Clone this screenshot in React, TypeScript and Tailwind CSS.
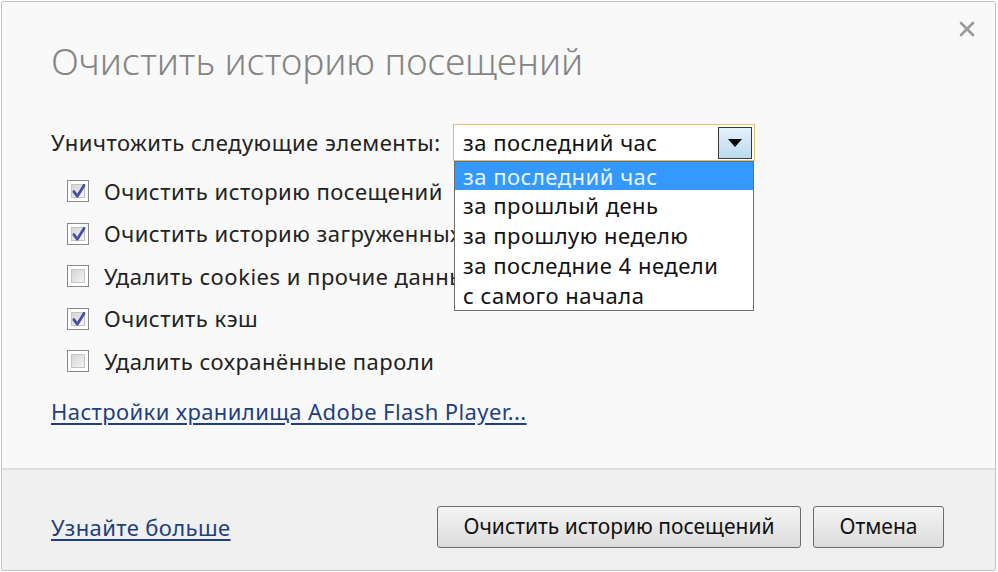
import React from 'react';

const font = { fontFamily: '"Noto Sans", "Open Sans", sans-serif' };

type CheckProps = { checked: boolean; label: string };

const Check = ({ checked, label }: CheckProps): JSX.Element => {
  return (
    <div className="flex items-center h-[42.5px] whitespace-nowrap">
      <div className="w-[22px] h-[22px] ml-[16px] border border-[#8a8a8a] bg-white p-[3px] shrink-0">
        <div className="relative w-full h-full border border-[#c4c4c4] bg-gradient-to-br from-[#d6d6d6] to-[#f4f4f4]">
          {checked && (
            <svg viewBox="0 0 14 14" className="absolute -left-[1px] -top-[2px] w-[16px] h-[16px]">
              <path d="M2.5 7.5 L5.5 11.5 L11.5 2" fill="none" stroke="#4b4ca6" strokeWidth="2.4" strokeLinecap="round" strokeLinejoin="round" />
            </svg>
          )}
        </div>
      </div>
      <span className="ml-[15px] text-[22px] tracking-[0.5px] text-[#222]">{label}</span>
    </div>
  );
};

const options = ['за последний час', 'за прошлый день', 'за прошлую неделю', 'за последние 4 недели', 'с самого начала'];

const App = (): JSX.Element => {
  return (
    <div className="w-[998px] h-[572px] bg-white overflow-hidden" style={font}>
      <div className="relative ml-[1px] mt-[1px] w-[995px] h-[570px] border border-[#c2c2c2] rounded-[2px] bg-[#f9f9f9] flex flex-col">
        <button className="absolute right-[20px] top-[19px] w-[16px] h-[16px]">
          <svg viewBox="0 0 16 16" className="w-full h-full">
            <path d="M2 2 L14 14 M14 2 L2 14" stroke="#9a9a9a" strokeWidth="2.6" strokeLinecap="round" />
          </svg>
        </button>

        <div className="flex-1 px-[49px] pt-[36px]">
          <h1 className="text-[37px] leading-[46px] font-light text-[#858585] whitespace-nowrap">
            Очистить историю посещений
          </h1>

          <div className="flex items-center mt-[40px] h-[37px] relative">
            <span className="text-[22px] tracking-[0.5px] text-[#222] whitespace-nowrap">Уничтожить следующие элементы:</span>
            <div className="absolute left-[402px] top-0 w-[302px]">
              <div className="h-[37px] border border-[#e2bd73] bg-white flex items-center pl-[9px] pr-[2px]">
                <span className="flex-1 text-[22px] tracking-[0.5px] text-[#111]">за последний час</span>
                <div className="w-[34px] h-[32px] border border-[#3a3a3a] bg-gradient-to-b from-[#e4f1fa] to-[#bcdaf0] flex items-center justify-center">
                  <svg viewBox="0 0 14 8" className="w-[14px] h-[8px]">
                    <path d="M0 0 H14 L7 8 Z" fill="#000" />
                  </svg>
                </div>
              </div>
              <div className="ml-[1px] w-[300px] border border-[#6e6e6e] bg-white z-10 relative">
                {options.map((o, i) => (
                  <div
                    key={o}
                    className={
                      i === 0
                        ? 'h-[28px] leading-[28px] px-[8px] bg-[#3399ff] text-[#eaf4ff] text-[22px] tracking-[0.5px]'
                        : 'h-[30px] leading-[30px] px-[8px] text-[#111] text-[22px] tracking-[0.5px]'
                    }
                  >
                    {o}
                  </div>
                ))}
              </div>
            </div>
          </div>

          <div className="mt-[9px] w-[403px] overflow-hidden">
            <Check checked label="Очистить историю посещений" />
            <Check checked label="Очистить историю загруженных файлов" />
            <Check checked={false} label="Удалить cookies и прочие данные сайтов и плагинов" />
            <Check checked label="Очистить кэш" />
            <Check checked={false} label="Удалить сохранённые пароли" />
          </div>

          <a href="#" className="inline-block mt-[12px] text-[22px] tracking-[0.4px] text-[#1f3f7f] underline underline-offset-[3px]">
            Настройки хранилища Adobe Flash Player...
          </a>
        </div>

        <div className="h-[102px] border-t-2 border-[#dedede] bg-[#f0f0f0] flex items-center px-[49px] pt-[14px]">
          <a href="#" className="text-[22px] tracking-[0.4px] text-[#1f3f7f] underline underline-offset-[3px]">
            Узнайте больше
          </a>
          <div className="flex-1" />
          <button className="h-[42px] w-[364px] rounded-[3px] border border-[#6c6c6c] bg-gradient-to-b from-[#f4f4f4] to-[#dcdcdc] text-[21px] text-[#111]">
            Очистить историю посещений
          </button>
          <button className="ml-[12px] mr-[2px] h-[42px] w-[131px] rounded-[3px] border border-[#6c6c6c] bg-gradient-to-b from-[#f4f4f4] to-[#dcdcdc] text-[21px] text-[#111]">
            Отмена
          </button>
        </div>
      </div>
    </div>
  );
};

export default App;
